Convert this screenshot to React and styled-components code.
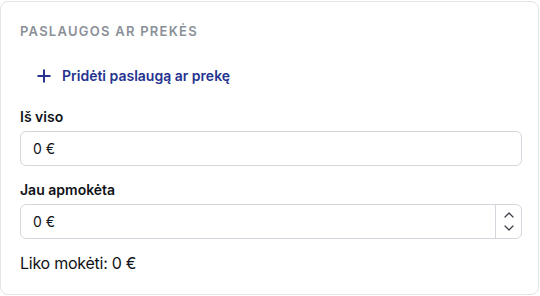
import React from "react";
import styled, { createGlobalStyle } from "styled-components";

const GlobalStyle = createGlobalStyle`
  html, body {
    margin: 0;
    padding: 0;
    background: #ffffff;
  }
  body {
    font-family: Inter, "Liberation Sans", sans-serif;
    color: #111318;
  }
`;

const Card = styled.section`
  box-sizing: border-box;
  width: 539px;
  height: 294px;
  margin-top: 1px;
  border: 1px solid #e1e3e8;
  border-radius: 8px;
  padding: 19px 16px 0 19px;
  display: flex;
  flex-direction: column;
`;

const Title = styled.h2`
  margin: 0;
  font-size: 13px;
  line-height: 20px;
  font-weight: 600;
  letter-spacing: 1.25px;
  text-transform: uppercase;
  color: #8b9098;
`;

const AddButton = styled.button`
  display: flex;
  align-items: center;
  gap: 11px;
  align-self: flex-start;
  margin: 25px 0 0 17px;
  padding: 0;
  border: 0;
  background: transparent;
  font-family: inherit;
  font-size: 14px;
  font-weight: 600;
  line-height: 20px;
  color: #26338f;
  cursor: pointer;
`;

const Field = styled.div`
  display: flex;
  flex-direction: column;
  gap: 5px;
  margin-top: ${(p) => p.$top}px;
`;

const Label = styled.label`
  font-size: 14px;
  font-weight: 600;
  line-height: 18px;
  color: #111318;
`;

const InputBox = styled.div`
  box-sizing: border-box;
  height: 35px;
  display: flex;
  align-items: stretch;
  border: 1px solid #d3d6dc;
  border-radius: 6px;
  overflow: hidden;
`;

const Value = styled.input`
  flex: 1;
  min-width: 0;
  border: 0;
  outline: none;
  padding: 0 0 0 12px;
  font-family: inherit;
  font-size: 14px;
  color: #111318;
  background: transparent;
`;

const Spinner = styled.div`
  width: 25px;
  border-left: 1px solid #d3d6dc;
  display: flex;
  flex-direction: column;
  align-items: center;
  justify-content: space-around;
  padding: 3px 0;
  color: #333;
`;

const Remaining = styled.p`
  margin: 14px 0 0;
  font-size: 16px;
  line-height: 20px;
  letter-spacing: -0.25px;
  color: #111318;
`;

function Plus() {
  return (
    <svg width="14" height="14" viewBox="0 0 14 14" fill="none">
      <path d="M7 0.5v13M0.5 7h13" stroke="#26338f" strokeWidth="2" />
    </svg>
  );
}

function Chevron({ up }) {
  return (
    <svg width="10" height="6" viewBox="0 0 10 6" fill="none">
      <path
        d={up ? "M1 5l4-4 4 4" : "M1 1l4 4 4-4"}
        stroke="#3a3d44"
        strokeWidth="1.2"
        strokeLinecap="round"
        strokeLinejoin="round"
      />
    </svg>
  );
}

export default function App() {
  return (
    <>
      <GlobalStyle />
      <Card>
        <Title>Paslaugos ar prekės</Title>
        <AddButton type="button">
          <Plus />
          Pridėti paslaugą ar prekę
        </AddButton>
        <Field $top={22}>
          <Label>Iš viso</Label>
          <InputBox>
            <Value defaultValue="0 €" />
          </InputBox>
        </Field>
        <Field $top={15}>
          <Label>Jau apmokėta</Label>
          <InputBox>
            <Value defaultValue="0 €" />
            <Spinner>
              <Chevron up />
              <Chevron />
            </Spinner>
          </InputBox>
        </Field>
        <Remaining>Liko mokėti: 0 €</Remaining>
      </Card>
    </>
  );
}
